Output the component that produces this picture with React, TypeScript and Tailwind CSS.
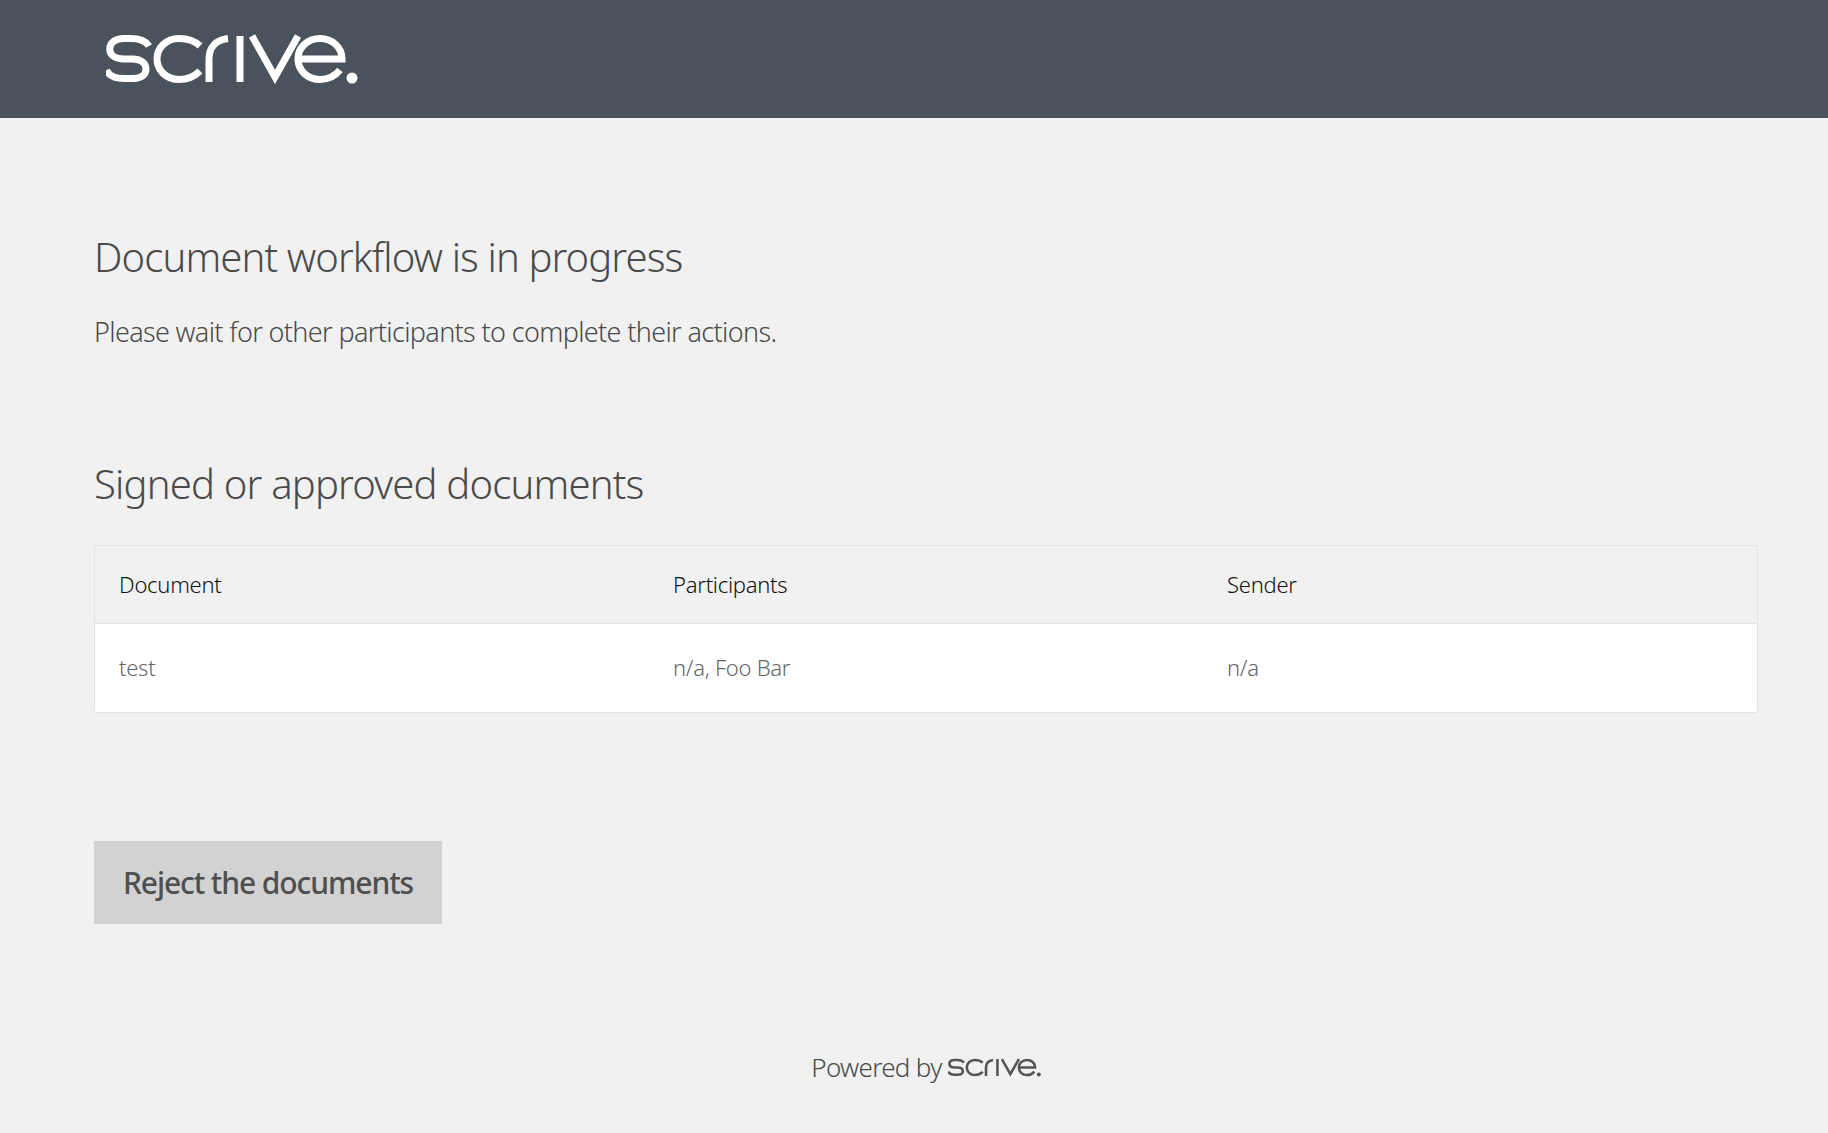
function Logo({ className, color }: { className: string; color: string }) {
  return (
    <svg viewBox="0 0 252 50" className={className} fill="none" stroke={color} strokeWidth="7">
      {/* s */}
      <path d="M43 12C40 7 33 4.500 24 4.500H18C9 4.500 3.700 9 3.700 15S9 25 18 25H26C35 25 40 29 40 35S35 44.500 26 44.500H18C9 44.500 3 42 0.500 36" />
      {/* c */}
      <path d="M94 12C89 7 82 4.500 73 4.500C60 4.500 51 14 51 25S60 45.500 73 45.500C82 45.500 89 42 94 37" />
      {/* r */}
      <path d="M103 48V25C103 13 110 6 122 4.500" />
      {/* i */}
      <path d="M134 2V48" />
      {/* v */}
      <path d="M146 2L169 43L192 2" />
      {/* e */}
      <path d="M192 25H236C236 13 226 4.500 214 4.500C201 4.500 192 14 192 25S201 45.500 214 45.500C222 45.500 229 42 234 36" />
      <circle cx="246" cy="44" r="5.500" fill={color} stroke="none" />
    </svg>
  );
}

const columns = [
  { head: 'Document', value: 'test' },
  { head: 'Participants', value: 'n/a, Foo Bar' },
  { head: 'Sender', value: 'n/a' },
];

export default function App() {
  return (
    <div className="min-h-screen bg-[#f1f1f1] font-['Noto_Sans','Liberation_Sans',sans-serif] text-[#4a4a4a]">
      <header className="flex h-[118px] items-center bg-[#4a535b] pl-[106px]">
        <Logo className="h-[50px] w-[252px]" color="#ffffff" />
      </header>
      <main className="pr-[70px] pl-[94px]">
        <h1 className="mt-[113px] text-[40px] leading-[52px] font-light tracking-[-0.022em]">Document workflow is in progress</h1>
        <p className="mt-[31px] text-[27px] leading-[36px] font-light tracking-[-0.024em]">Please wait for other participants to complete their actions.</p>
        <h2 className="mt-[108px] text-[40px] leading-[52px] font-light tracking-[-0.02em]">Signed or approved documents</h2>
        <div className="mt-[35px] overflow-hidden rounded-[2px] border border-[#e2e2e2]">
          <div className="grid h-[78px] grid-cols-3 items-center border-b border-[#e2e2e2] text-[22px] font-light tracking-[-0.012em] text-[#111111]">
            {columns.map((col) => (
              <div key={col.head} className="pl-[24px]">{col.head}</div>
            ))}
          </div>
          <div className="grid h-[88px] grid-cols-3 items-center bg-white pb-[2px] text-[22px] font-light tracking-[-0.012em] text-[#666666]">
            {columns.map((col) => (
              <div key={col.head} className="pl-[24px]">{col.value}</div>
            ))}
          </div>
        </div>
        <button className="mt-[128px] flex h-[83px] w-[348px] items-center justify-center bg-[#d2d2d2] text-[30px] font-medium tracking-[-0.036em] text-[#4f4f4f]">
          Reject the documents
        </button>
        <footer className="mt-[125px] flex items-center justify-center gap-[6px] text-[26px] leading-[36px] font-light tracking-[-0.027em]">
          <span>Powered by</span>
          <Logo className="h-[19px] w-[93px]" color="#555555" />
        </footer>
      </main>
    </div>
  );
}
